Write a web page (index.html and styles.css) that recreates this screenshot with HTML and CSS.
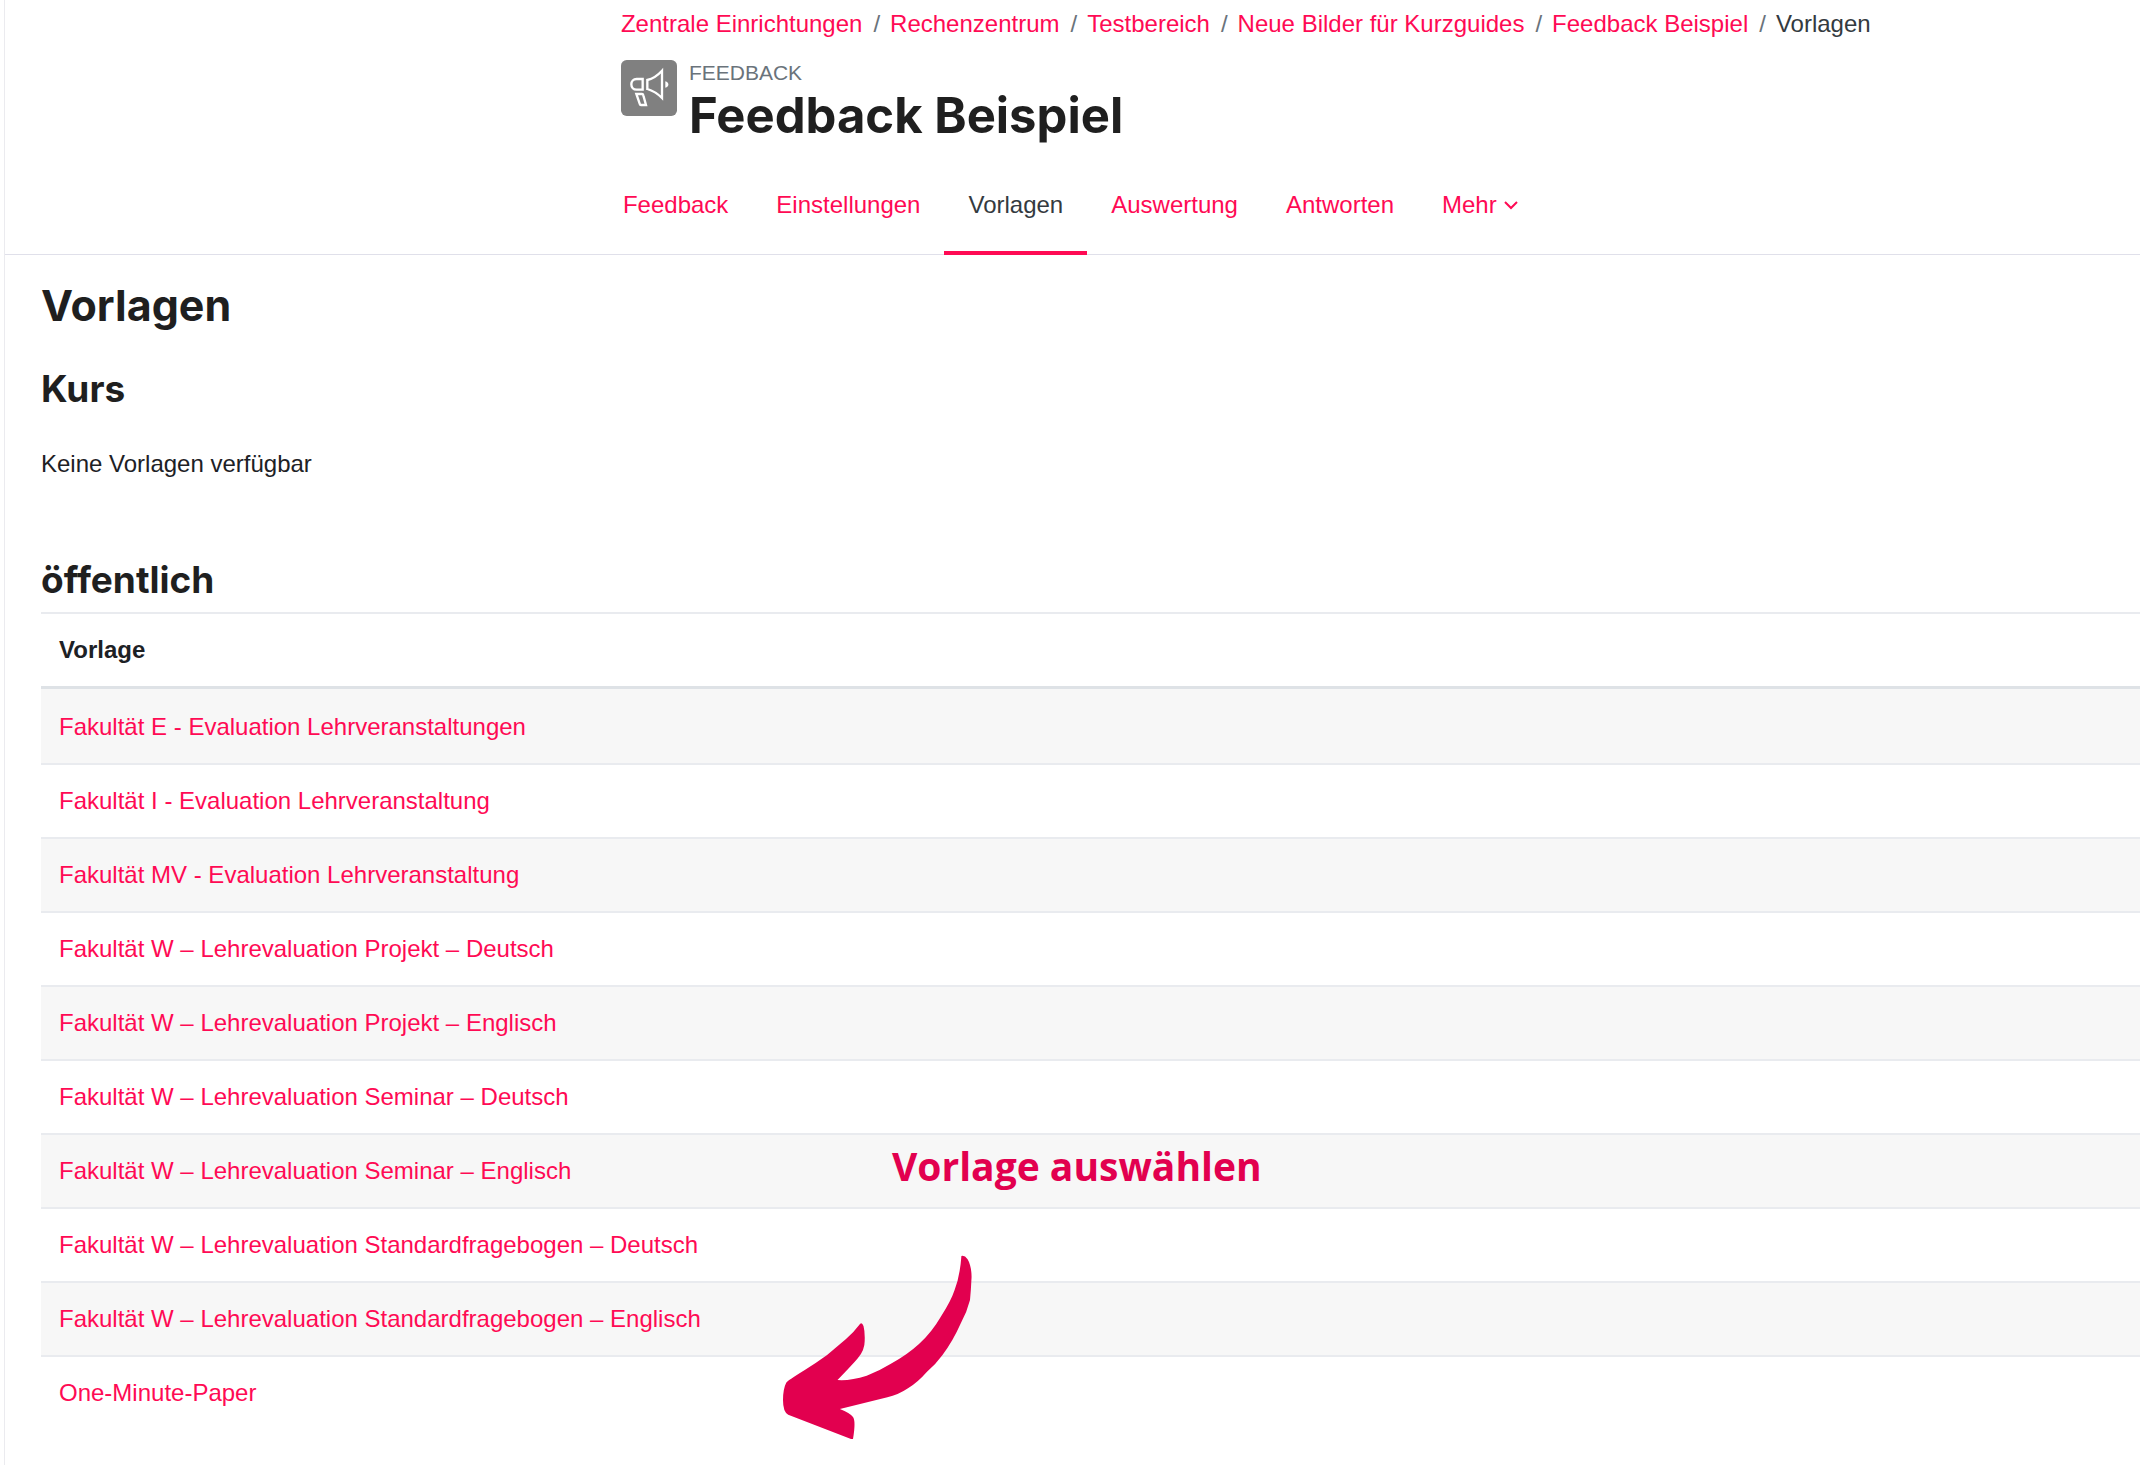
FILE: index.html
```html
<!DOCTYPE html>
<html lang="de">
<head>
<meta charset="utf-8">
<meta name="viewport" content="width=device-width, initial-scale=1">
<title>Feedback Beispiel: Vorlagen</title>
<link rel="stylesheet" href="styles.css">
</head>
<body>
<div class="page">
  <header class="page-header">
    <nav aria-label="Navigationspfad">
      <ol class="breadcrumb">
        <li><a href="#">Zentrale Einrichtungen</a></li>
        <li><a href="#">Rechenzentrum</a></li>
        <li><a href="#">Testbereich</a></li>
        <li><a href="#">Neue Bilder für Kurzguides</a></li>
        <li><a href="#">Feedback Beispiel</a></li>
        <li aria-current="page">Vorlagen</li>
      </ol>
    </nav>
    <div class="activity">
      <svg class="activity-icon" viewBox="33 30 168 168" aria-hidden="true">
        <rect x="33" y="30" width="168" height="168" rx="17" fill="#808080"/>
        <g fill="none" stroke="#fff" stroke-width="7">
          <path d="M98 87V119H80C70 119 64 112 64 103S70 87 80 87Z"/>
          <path d="M112 90Q136 84 156 62V144Q136 124 112 117Z"/>
          <path d="M79 132H96Q99 132 100 136L108 165H93Q90 165 89 161Z"/>
        </g>
        <path d="M166 94Q175 96 175 103.500T166 113Z" fill="#fff"/>
      </svg>
      <div>
        <div class="activity-type">FEEDBACK</div>
        <h1>Feedback Beispiel</h1>
      </div>
    </div>
    <nav class="tabs" aria-label="Aktivität">
      <a class="tab" href="#">Feedback</a>
      <a class="tab" href="#">Einstellungen</a>
      <a class="tab tab-active" href="#" aria-current="page">Vorlagen</a>
      <a class="tab" href="#">Auswertung</a>
      <a class="tab" href="#">Antworten</a>
      <button class="tab" type="button">Mehr
        <svg class="chevron" viewBox="0 0 14 10" aria-hidden="true"><path d="M1 2L7 8L13 2" fill="none" stroke="currentColor" stroke-width="2"/></svg>
      </button>
    </nav>
  </header>
  <main class="content">
    <h2>Vorlagen</h2>
    <h3>Kurs</h3>
    <p>Keine Vorlagen verfügbar</p>
    <h3>öffentlich</h3>
    <div class="templates">
      <table>
        <thead><tr><th scope="col">Vorlage</th></tr></thead>
        <tbody>
          <tr><td><a href="#">Fakultät E - Evaluation Lehrveranstaltungen</a></td></tr>
          <tr><td><a href="#">Fakultät I - Evaluation Lehrveranstaltung</a></td></tr>
          <tr><td><a href="#">Fakultät MV - Evaluation Lehrveranstaltung</a></td></tr>
          <tr><td><a href="#">Fakultät W – Lehrevaluation Projekt – Deutsch</a></td></tr>
          <tr><td><a href="#">Fakultät W – Lehrevaluation Projekt – Englisch</a></td></tr>
          <tr><td><a href="#">Fakultät W – Lehrevaluation Seminar – Deutsch</a></td></tr>
          <tr><td><a href="#">Fakultät W – Lehrevaluation Seminar – Englisch</a></td></tr>
          <tr><td><a href="#">Fakultät W – Lehrevaluation Standardfragebogen – Deutsch</a></td></tr>
          <tr><td><a href="#">Fakultät W – Lehrevaluation Standardfragebogen – Englisch</a></td></tr>
          <tr><td><a href="#">One-Minute-Paper</a></td></tr>
        </tbody>
      </table>
      <div class="hint">Vorlage auswählen</div>
      <svg class="hint-arrow" viewBox="0 0 194 192" aria-hidden="true">
        <path fill="#e2004f" d="M181.400 6Q184.500 5 187.600 9.300C191 15 192 24 191.400 30Q191 40 190 50Q187 62 180.800 73.300Q173 91 162.500 105Q156 114 147 121.700Q138 132 128 138.300Q118 145 107.400 147.300L59.900 159Q70 163 73 167Q76 171 73 189H71L8.200 164.700Q3 162 3 150Q3 139 6.200 132.700Q7 131 24.800 120Q36 113 47.100 105L66 89Q74 82 80.200 73.700Q82 72 83.500 76Q85 82 84.700 90Q85 100 78 108Q73 114 57.500 130Q70 131 86.700 125.700Q99 121 110.900 113.700Q127 105 139 94Q152 82 160.800 66.700Q171 51 174.600 40Q180 26 181.400 6Z"/>
      </svg>
    </div>
  </main>
</div>
</body>
</html>
```
FILE: styles.css
```css
* { box-sizing: border-box; }

body {
  margin: 0;
  background: #fff;
  color: #1d2125;
  font: 24px/36px "Liberation Sans", Arial, sans-serif;
}

a { color: #ff0a54; text-decoration: none; }

h1, h2, h3, p { margin: 0; }

h1, h2, h3 {
  font-family: Inter, "Liberation Sans", sans-serif;
  font-weight: 700;
  color: #1f1f1f;
}

h1 { font-size: 49px; line-height: 52px; }
h2 { font-size: 43px; line-height: 52px; }
h3 { font-size: 37px; line-height: 44px; }

.page {
  min-height: 100vh;
  margin-left: 4px;
  border-left: 1px solid #ebebef;
  overflow: hidden;
}

.page-header {
  padding: 6px 0 0 28.85%;
  border-bottom: 1px solid #e0e0ea;
}

.breadcrumb {
  display: flex;
  flex-wrap: wrap;
  margin: 0;
  padding: 0;
  list-style: none;
}

.breadcrumb li + li::before {
  content: "/";
  padding: 0 10px 0 11px;
  color: #6a737b;
}

.breadcrumb [aria-current] { color: #343a40; }

.activity {
  display: flex;
  gap: 12px;
  margin-top: 18px;
}

.activity-icon { width: 56px; height: 56px; }

.activity-type {
  font-size: 21px;
  line-height: 26px;
  color: #6a737b;
}

.activity h1 { margin-top: 4px; }

.tabs {
  display: flex;
  flex-wrap: wrap;
  margin: 20px 0 -1px -22px;
}

.tab {
  display: flex;
  align-items: center;
  gap: 7px;
  padding: 25px 24px 28px;
  border: 0;
  border-bottom: 4px solid transparent;
  background: none;
  color: #ff0a54;
  font: inherit;
  line-height: 36px;
}

.tab-active { color: #343a40; border-bottom-color: #ff0a54; }

.chevron { width: 14px; height: 10px; }

.content { padding: 24px 0 24px 36px; }

.content h2 { margin-bottom: 36px; }

.content p { margin: 35px 0 76px; }

.templates { position: relative; margin-top: 10px; }

table { width: 100%; border-collapse: separate; border-spacing: 0; }

th, td {
  padding: 18px;
  border-top: 2px solid #e9ebef;
  text-align: left;
}

th { border-bottom: 3px solid #dee2e6; }

tbody tr:nth-child(odd) { background: #f7f7f7; }
tbody tr:first-child td { border-top-color: transparent; }

.hint {
  position: absolute;
  left: 851px;
  top: 526px;
  color: #e2004f;
  font: 700 39px/56px "Open Sans", "Noto Sans", sans-serif;
  white-space: nowrap;
}

.hint-arrow {
  position: absolute;
  left: 739px;
  top: 638px;
  width: 194px;
  height: 192px;
}
```
